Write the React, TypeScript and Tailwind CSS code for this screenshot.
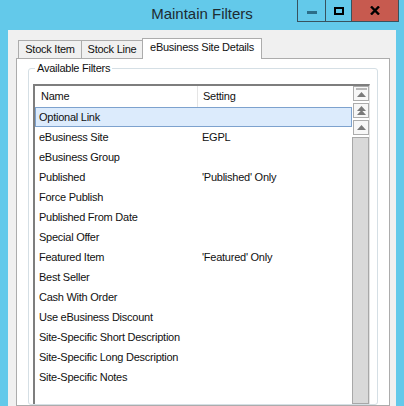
import React from "react";

const rows: [string, string][] = [
  ["Optional Link", ""],
  ["eBusiness Site", "EGPL"],
  ["eBusiness Group", ""],
  ["Published", "'Published' Only"],
  ["Force Publish", ""],
  ["Published From Date", ""],
  ["Special Offer", ""],
  ["Featured Item", "'Featured' Only"],
  ["Best Seller", ""],
  ["Cash With Order", ""],
  ["Use eBusiness Discount", ""],
  ["Site-Specific Short Description", ""],
  ["Site-Specific Long Description", ""],
  ["Site-Specific Notes", ""],
];

function Tri({ y }: { y: number }) {
  return <polygon points={`3,${y + 5} 7.5,${y} 12,${y + 5}`} fill="#7a7a7a" />;
}

export default function App() {
  return (
    <div className="w-[404px] h-[406px] bg-[#63c9ea] flex flex-col overflow-hidden font-['Liberation_Sans',Arial,sans-serif] text-[11px] tracking-[-0.25px] text-[#111]">
      {/* title bar */}
      <div className="relative h-[30px] shrink-0 flex items-center justify-center">
        <span className="text-[15px] tracking-normal text-[#1d2b31] -mt-[1px]">Maintain Filters</span>
        <div className="absolute top-0 right-[5px] flex h-[22px] border border-t-0 border-[#38525e]">
          <div className="w-[27px] flex items-center justify-center">
            <div className="w-[10px] h-[3px] bg-[#2b6e89] mt-[4px]" />
          </div>
          <div className="w-[26px] border-l border-[#38525e] flex items-center justify-center">
            <div className="w-[10px] h-[8px] border-2 border-black" />
          </div>
          <div className="w-[47px] border-l border-[#38525e] bg-[#c75a4f] flex items-center justify-center">
            <svg width="10" height="9" viewBox="0 0 10 9">
              <path d="M1 0.5 L9 8.5 M9 0.5 L1 8.5" stroke="#000" strokeWidth="2.4" />
            </svg>
          </div>
        </div>
      </div>

      {/* client */}
      <div className="flex-1 mx-[8px] bg-[#f0f0f0] pt-[7px] pl-[8px] pr-[6px] flex flex-col min-h-0">
        {/* tabs */}
        <div className="flex items-end h-[21px] pl-[2px] shrink-0">
          <div className="w-[64px] h-[18px] border border-b-0 border-[#acacac] bg-[#f0f0f0] flex items-center justify-center">
            Stock Item
          </div>
          <div className="w-[61px] h-[18px] border border-l-0 border-b-0 border-[#acacac] bg-[#f0f0f0] flex items-center justify-center">
            Stock Line
          </div>
          <div className="w-[120px] h-[21px] -ml-px -mb-px relative z-10 border border-b-0 border-[#acacac] bg-white flex items-center justify-center pb-[3px]">
            eBusiness Site Details
          </div>
        </div>

        {/* panel */}
        <div className="flex-1 border border-[#acacac] bg-white pt-[2px] px-[11px] flex flex-col min-h-0">
          <fieldset className="flex-1 border border-[#d5dfe5] rounded-[3px] px-[4px] pt-[8px] flex flex-col min-h-0">
            <legend className="ml-[2px] px-[2px] leading-[15px]">Available Filters</legend>
            <div className="flex-1 mr-[3px] border-t-2 border-l-2 border-[#7e7e7e] border-r border-r-[#e2e2e2] bg-white flex min-h-0">
              <div className="flex-1 flex flex-col">
                <div className="h-[21px] grid grid-cols-[163px_1fr] items-center">
                  <div className="pl-[6px] h-full flex items-center border-r border-[#e5e5e5]">Name</div>
                  <div className="pl-[5px]">Setting</div>
                </div>
                {rows.map(([n, s], i) => (
                  <div
                    key={n}
                    className={
                      i === 0
                        ? "h-[20px] grid grid-cols-[161px_1fr] items-center border border-[#7da2ce] bg-[#dcebfc]"
                        : "h-[20px] grid grid-cols-[161px_1fr] items-center border border-transparent"
                    }
                  >
                    <div className="pl-[3px] whitespace-nowrap">{n}</div>
                    <div className="pl-[5px] whitespace-nowrap">{s}</div>
                  </div>
                ))}
              </div>
              {/* scrollbar */}
              <div className="w-[17px] flex flex-col gap-[2px]">
                <div className="h-[15px] ml-[1px] border border-[#acacac] bg-[#f7f7f7]">
                  <svg width="14" height="13" viewBox="0 0 14 13" className="block">
                    <rect x="2" y="1.5" width="11" height="1" fill="#7a7a7a" />
                    <Tri y={5} />
                  </svg>
                </div>
                <div className="h-[15px] ml-[1px] border border-[#acacac] bg-[#f7f7f7]">
                  <svg width="14" height="13" viewBox="0 0 14 13" className="block">
                    <Tri y={2} />
                    <Tri y={6} />
                  </svg>
                </div>
                <div className="h-[15px] ml-[1px] border border-[#acacac] bg-[#f7f7f7]">
                  <svg width="14" height="13" viewBox="0 0 14 13" className="block">
                    <Tri y={4} />
                  </svg>
                </div>
                <div className="flex-1 border border-[#a8a8a8] bg-[#d9d9d9]" />
              </div>
            </div>
          </fieldset>
        </div>
      </div>
    </div>
  );
}
